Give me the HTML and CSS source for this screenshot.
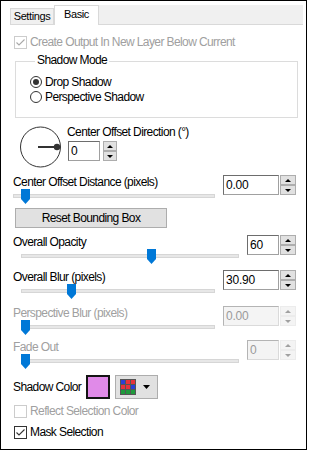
FILE: index.html
```html
<!DOCTYPE html>
<html lang="en">
<head>
    <meta charset="UTF-8">
    <meta name="viewport" content="width=device-width, initial-scale=1.0">
    <title>Drop Shadow</title>
    <link rel="stylesheet" href="styles.css">
</head>
<body>

<div class="window">
    <div class="tabs">
        <div class="tab">Settings</div>
        <div class="tab tab-active">Basic</div>
        <div class="tab-fill"></div>
    </div>

    <div class="panel">
        <div class="check check-disabled row-create">
            <span class="box"><svg viewBox="0 0 11 11"><path d="M1.5 5.5 L4 8 L9.5 2.5"/></svg></span>
            Create Output In New Layer Below Current
        </div>

        <div class="group">
            <span class="group-title">Shadow Mode</span>
            <div class="radio"><span class="dot dot-on"></span>Drop Shadow</div>
            <div class="radio"><span class="dot"></span>Perspective Shadow</div>
        </div>

        <div class="dial-row">
            <svg class="dial" width="45" height="45" viewBox="0 0 45 45">
                <circle cx="22.5" cy="22" r="20" fill="none" stroke="#333" stroke-width="1"/>
                <line x1="20" y1="22" x2="39" y2="22" stroke="#333" stroke-width="2"/>
                <circle cx="39" cy="22" r="3.2" fill="#333"/>
            </svg>
            <div class="dial-side">
                <div class="label">Center Offset Direction (°)</div>
                <div class="spin spin-narrow spin-dial">
                    <div class="spin-input">0</div>
                    <div class="spin-btns"><span class="spin-btn"><i class="up"></i></span><span class="spin-btn"><i class="down"></i></span></div>
                </div>
            </div>
        </div>

        <div class="param param-distance">
            <div class="param-main">
                <div class="label">Center Offset Distance (pixels)</div>
                <div class="slider slider-full">
                    <div class="track"></div>
                    <svg class="thumb" style="left: 8px" width="9" height="15" viewBox="0 0 9 15"><path d="M0 0 H9 V10 L4.5 15 L0 10 Z"/></svg>
                </div>
            </div>
            <div class="spin spin-wide">
                <div class="spin-input">0.00</div>
                <div class="spin-btns"><span class="spin-btn"><i class="up"></i></span><span class="spin-btn"><i class="down"></i></span></div>
            </div>
        </div>

        <div class="button reset">Reset Bounding Box</div>

        <div class="param param-opacity">
            <div class="param-main">
                <div class="label">Overall Opacity</div>
                <div class="slider">
                    <div class="track"></div>
                    <svg class="thumb" style="left: 134px" width="9" height="15" viewBox="0 0 9 15"><path d="M0 0 H9 V10 L4.5 15 L0 10 Z"/></svg>
                </div>
            </div>
            <div class="spin spin-narrow">
                <div class="spin-input">60</div>
                <div class="spin-btns"><span class="spin-btn"><i class="up"></i></span><span class="spin-btn"><i class="down"></i></span></div>
            </div>
        </div>

        <div class="param param-blur">
            <div class="param-main">
                <div class="label">Overall Blur (pixels)</div>
                <div class="slider">
                    <div class="track"></div>
                    <svg class="thumb" style="left: 54px" width="9" height="15" viewBox="0 0 9 15"><path d="M0 0 H9 V10 L4.5 15 L0 10 Z"/></svg>
                </div>
            </div>
            <div class="spin spin-wide">
                <div class="spin-input">30.90</div>
                <div class="spin-btns"><span class="spin-btn"><i class="up"></i></span><span class="spin-btn"><i class="down"></i></span></div>
            </div>
        </div>

        <div class="param param-persp disabled">
            <div class="param-main">
                <div class="label">Perspective Blur (pixels)</div>
                <div class="slider">
                    <div class="track"></div>
                    <svg class="thumb" style="left: 8px" width="9" height="15" viewBox="0 0 9 15"><path d="M0 0 H9 V10 L4.5 15 L0 10 Z"/></svg>
                </div>
            </div>
            <div class="spin spin-wide">
                <div class="spin-input">0.00</div>
                <div class="spin-btns"><span class="spin-btn"><i class="up"></i></span><span class="spin-btn"><i class="down"></i></span></div>
            </div>
        </div>

        <div class="param param-fade disabled">
            <div class="param-main">
                <div class="label">Fade Out</div>
                <div class="slider">
                    <div class="track"></div>
                    <svg class="thumb" style="left: 8px" width="9" height="15" viewBox="0 0 9 15"><path d="M0 0 H9 V10 L4.5 15 L0 10 Z"/></svg>
                </div>
            </div>
            <div class="spin spin-narrow">
                <div class="spin-input">0</div>
                <div class="spin-btns"><span class="spin-btn"><i class="up"></i></span><span class="spin-btn"><i class="down"></i></span></div>
            </div>
        </div>

        <div class="color-row">
            <div class="label color-label">Shadow Color</div>
            <div class="swatch"></div>
            <div class="button palette">
                <svg width="16" height="16" viewBox="0 0 16 16">
                    <rect width="16" height="16" fill="#555"/>
                    <rect x="1" y="1" width="4" height="4" fill="#2b3fd6"/>
                    <rect x="6" y="1" width="4" height="4" fill="#e8323a"/>
                    <rect x="11" y="1" width="4" height="4" fill="#e8323a"/>
                    <rect x="1" y="6" width="4" height="4" fill="#e8323a"/>
                    <rect x="6" y="6" width="4" height="4" fill="#e8323a"/>
                    <rect x="11" y="6" width="4" height="4" fill="#2b3fd6"/>
                    <rect x="1" y="11" width="4" height="4" fill="#1f9a3c"/>
                    <rect x="6" y="11" width="4" height="4" fill="#1f9a3c"/>
                    <rect x="11" y="11" width="4" height="4" fill="#1f9a3c"/>
                </svg>
                <svg class="caret" width="7" height="4" viewBox="0 0 7 4"><path d="M0 0 H7 L3.5 4 Z"/></svg>
            </div>
        </div>

        <div class="check check-disabled row-reflect">
            <span class="box"></span>
            Reflect Selection Color
        </div>

        <div class="check row-mask">
            <span class="box"><svg viewBox="0 0 11 11"><path d="M1.5 5.5 L4 8 L9.5 2.5"/></svg></span>
            Mask Selection
        </div>
    </div>
</div>

</body>
</html>
```

FILE: styles.css
```css
body {
    margin: 0;
    background-color: #ffffff;
    font-family: "Liberation Sans", Arial, sans-serif;
    font-size: 12px;
    line-height: 14px;
    letter-spacing: -0.6px;
    color: #000000;
}
.window {
    width: 307px;
    height: 450px;
    box-sizing: border-box;
    border: 1px solid #000000;
    background-color: #ffffff;
}

/* tabs */
.tabs {
    display: flex;
    height: 20px;
    margin: 4px 3px 0 9px;
    font-size: 11px;
    letter-spacing: -0.4px;
}
.tab {
    box-sizing: border-box;
    width: 44px;
    height: 17px;
    margin-top: 3px;
    background-color: #f0f0f0;
    border: 1px solid #d9d9d9;
    text-align: center;
}
.tab-active {
    width: 45px;
    height: 20px;
    margin-top: 0;
    padding-top: 1px;
    background-color: #ffffff;
    border-bottom: none;
}
.tab-fill {
    flex: 1;
    box-sizing: border-box;
    height: 20px;
    background-color: #f0f0f0;
    border-bottom: 1px solid #d9d9d9;
}

.panel {
    padding: 0 10px 0 12px;
}

/* checkboxes */
.check {
    display: flex;
    align-items: center;
    height: 14px;
}
.check .box {
    box-sizing: border-box;
    width: 13px;
    height: 13px;
    margin: 0 3px 0 1px;
    border: 1px solid #333333;
    background-color: #ffffff;
}
.check .box svg {
    display: block;
    width: 11px;
    height: 11px;
    fill: none;
    stroke: #333333;
    stroke-width: 1.1;
}
.check-disabled {
    color: #a0a0a0;
}
.check-disabled .box {
    border-color: #cccccc;
}
.check-disabled .box svg {
    stroke: #a8a8a8;
}
.row-create {
    margin-top: 10px;
}
.row-reflect {
    margin-top: 5px;
}
.row-mask {
    margin-top: 7px;
}

/* group box */
.group {
    margin: 12px -2px 0 2px;
    padding: 0 0 12px 14px;
    border: 1px solid #dcdcdc;
}
.group-title {
    display: block;
    width: max-content;
    margin: -9px 0 8px 5px;
    padding: 0 2px;
    background-color: #ffffff;
}
.radio {
    display: flex;
    align-items: center;
    height: 14px;
    margin-bottom: 1px;
}
.dot {
    box-sizing: border-box;
    display: flex;
    align-items: center;
    justify-content: center;
    width: 12px;
    height: 12px;
    margin-right: 3px;
    border: 1px solid #333333;
    border-radius: 50%;
}
.dot-on::after {
    content: "";
    width: 6px;
    height: 6px;
    border-radius: 50%;
    background-color: #333333;
}

/* direction dial */
.dial-row {
    display: flex;
    margin-top: 7px;
}
.dial {
    display: block;
    margin-left: 5px;
}
.dial-side {
    margin-left: 4px;
}
.dial-side .spin {
    margin: 2px 0 0 1px;
}

/* slider + number rows */
.param {
    display: flex;
    align-items: flex-start;
    gap: 8px;
}
.param-main {
    flex: 1;
}
.param-distance {
    margin-top: 5px;
}
.param-opacity {
    margin-top: 7px;
}
.param-blur {
    margin-top: 6px;
}
.param-persp {
    margin-top: 7px;
}
.param-fade {
    margin-top: 5px;
}
.disabled .label {
    color: #a0a0a0;
}
.slider {
    position: relative;
    height: 10px;
    padding-top: 5px;
}
.track {
    box-sizing: border-box;
    height: 4px;
    margin-left: 8px;
    background-color: #e7e7e7;
    border: 1px solid #d6d6d6;
}
.slider-full .track {
    margin-left: 0;
}
.thumb {
    position: absolute;
    top: 0;
    fill: #0078d7;
}

/* spinners */
.spin {
    display: flex;
    gap: 1px;
    height: 20px;
}
.spin-input {
    box-sizing: border-box;
    height: 20px;
    padding-left: 2px;
    line-height: 18px;
    letter-spacing: -0.2px;
    background-color: #ffffff;
    border: 1px solid;
    border-color: #6d6d6d #a0a0a0 #a0a0a0 #6d6d6d;
}
.spin-wide .spin-input {
    width: 56px;
}
.spin-narrow .spin-input {
    width: 32px;
}
.spin-btns {
    display: flex;
    flex-direction: column;
    width: 16px;
}
.spin-dial {
    gap: 3px;
}
.spin-dial .spin-btns {
    width: 14px;
}
.spin-btn {
    box-sizing: border-box;
    display: flex;
    align-items: center;
    justify-content: center;
    height: 10px;
    background-color: #e1e1e1;
    border: 1px solid #adadad;
}
.spin-btn i {
    width: 0;
    height: 0;
    border-left: 3px solid transparent;
    border-right: 3px solid transparent;
}
.spin-btn .up {
    border-bottom: 3px solid #000000;
}
.spin-btn .down {
    border-top: 3px solid #000000;
}
.disabled .spin-input {
    color: #9a9a9a;
    background-color: #f4f4f4;
    border-color: #b4b4b4 #dadada #dadada #b4b4b4;
}
.disabled .spin-btn {
    background-color: #f4f4f4;
    border-color: #ececec;
}
.disabled .spin-btn .up {
    border-bottom-color: #a0a0a0;
}
.disabled .spin-btn .down {
    border-top-color: #a0a0a0;
}

/* buttons */
.button {
    box-sizing: border-box;
    height: 20px;
    background-color: #e1e1e1;
    border: 1px solid #adadad;
}
.reset {
    width: 152px;
    margin: 4px 0 0 2px;
    line-height: 18px;
    text-align: center;
}

/* shadow colour */
.color-row {
    display: flex;
    align-items: center;
    height: 24px;
    margin-top: 6px;
}
.color-label {
    flex-shrink: 0;
    width: 73px;
    white-space: nowrap;
}
.swatch {
    box-sizing: border-box;
    width: 24px;
    height: 24px;
    background-color: #e08ae8;
    border: 2px solid #141414;
}
.palette {
    display: flex;
    align-items: center;
    width: 43px;
    height: 24px;
    margin-left: 5px;
    padding-left: 4px;
}
.palette .caret {
    margin-left: 7px;
    fill: #000000;
}
```
